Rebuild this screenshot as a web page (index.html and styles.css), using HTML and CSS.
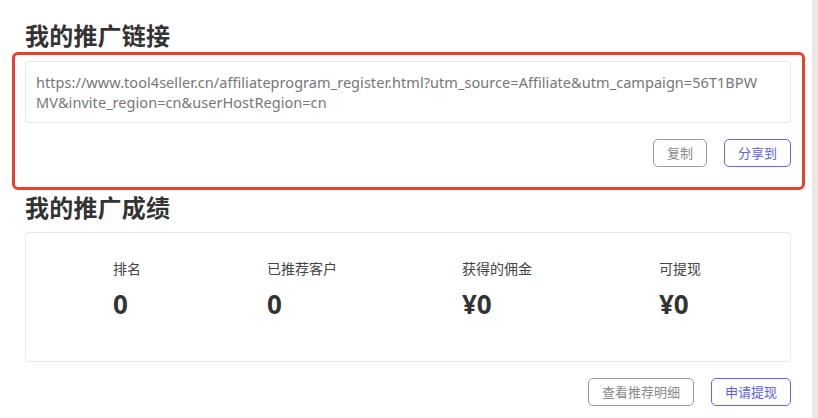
FILE: index.html
```html
<!DOCTYPE html>
<html lang="zh-CN">
<head>
<meta charset="utf-8">
<title>我的推广</title>
<link rel="stylesheet" href="styles.css">
</head>
<body>
<div class="layout">
  <main class="page">
    <h2 class="title title-first">我的推广链接</h2>
    <div class="url-box">https://www.tool4seller.cn/affiliateprogram_register.html?utm_source=Affiliate&amp;utm_campaign=56T1BPWMV&amp;invite_region=cn&amp;userHostRegion=cn</div>
    <div class="actions actions-link">
      <button class="btn btn-gray">复制</button>
      <button class="btn btn-blue">分享到</button>
    </div>
    <h2 class="title title-second">我的推广成绩</h2>
    <div class="stats">
      <div class="stat">
        <div class="stat-label">排名</div>
        <div class="stat-value">0</div>
      </div>
      <div class="stat">
        <div class="stat-label">已推荐客户</div>
        <div class="stat-value">0</div>
      </div>
      <div class="stat">
        <div class="stat-label">获得的佣金</div>
        <div class="stat-value">¥0</div>
      </div>
      <div class="stat">
        <div class="stat-label">可提现</div>
        <div class="stat-value">¥0</div>
      </div>
    </div>
    <div class="actions actions-stats">
      <button class="btn btn-gray">查看推荐明细</button>
      <button class="btn btn-blue">申请提现</button>
    </div>
    <div class="highlight"></div>
  </main>
  <div class="scrollbar"></div>
</div>
</body>
</html>
```

FILE: styles.css
```css
* {
  box-sizing: border-box;
}

html, body {
  margin: 0;
  padding: 0;
  background: #ffffff;
}

body {
  font-family: "Noto Sans", "Noto Sans CJK SC", sans-serif;
  color: #333333;
  width: 818px;
  height: 418px;
  overflow: hidden;
}

.layout {
  display: flex;
  height: 418px;
}

.page {
  position: relative;
  width: 812px;
  padding-left: 25px;
  padding-right: 21px;
}

.scrollbar {
  width: 6px;
  background: #e9e9e9;
}

.title {
  margin: 0;
  font-family: "Noto Sans CJK SC", sans-serif;
  font-size: 24px;
  font-weight: 700;
  line-height: 32px;
  color: #333333;
  letter-spacing: 0.2px;
}

.title-first {
  margin-top: 19px;
}

.title-second {
  margin-top: 24px;
}

.url-box {
  margin-top: 10px;
  height: 62px;
  border: 1px solid #e7e7ee;
  border-radius: 4px;
  padding: 10px 20px 10px 10px;
  font-size: 14.5px;
  line-height: 20px;
  letter-spacing: 0.05px;
  color: #777777;
  word-break: break-all;
}

.actions {
  display: flex;
  justify-content: flex-end;
  gap: 17px;
}

.actions-link {
  margin-top: 16px;
}

.actions-stats {
  margin-top: 16px;
}

.btn {
  height: 28px;
  padding: 0 13px;
  border-radius: 5px;
  background: #ffffff;
  font-family: "Noto Sans CJK SC", sans-serif;
  font-size: 13px;
  line-height: 26px;
  cursor: pointer;
}

.btn-gray {
  border: 1px solid #9a9a9a;
  color: #8a8a8a;
}

.btn-blue {
  border: 1px solid #6265f0;
  color: #5b5ef0;
}

.stats {
  margin-top: 9px;
  height: 130px;
  border: 1px solid #e7e7ee;
  border-radius: 4px;
  padding: 25px 0 0 87px;
  display: grid;
  grid-template-columns: 154px 195px 197px 1fr;
  align-content: start;
}

.stat-label {
  font-family: "Noto Sans CJK SC", sans-serif;
  font-size: 14px;
  line-height: 20px;
  color: #444444;
}

.stat-value {
  margin-top: 8px;
  font-size: 26px;
  font-weight: 700;
  line-height: 36px;
  color: #333333;
}

.highlight {
  position: absolute;
  left: 12px;
  top: 52px;
  width: 793px;
  height: 138px;
  border: 3px solid #e9412b;
  border-radius: 6px;
  pointer-events: none;
}
```
